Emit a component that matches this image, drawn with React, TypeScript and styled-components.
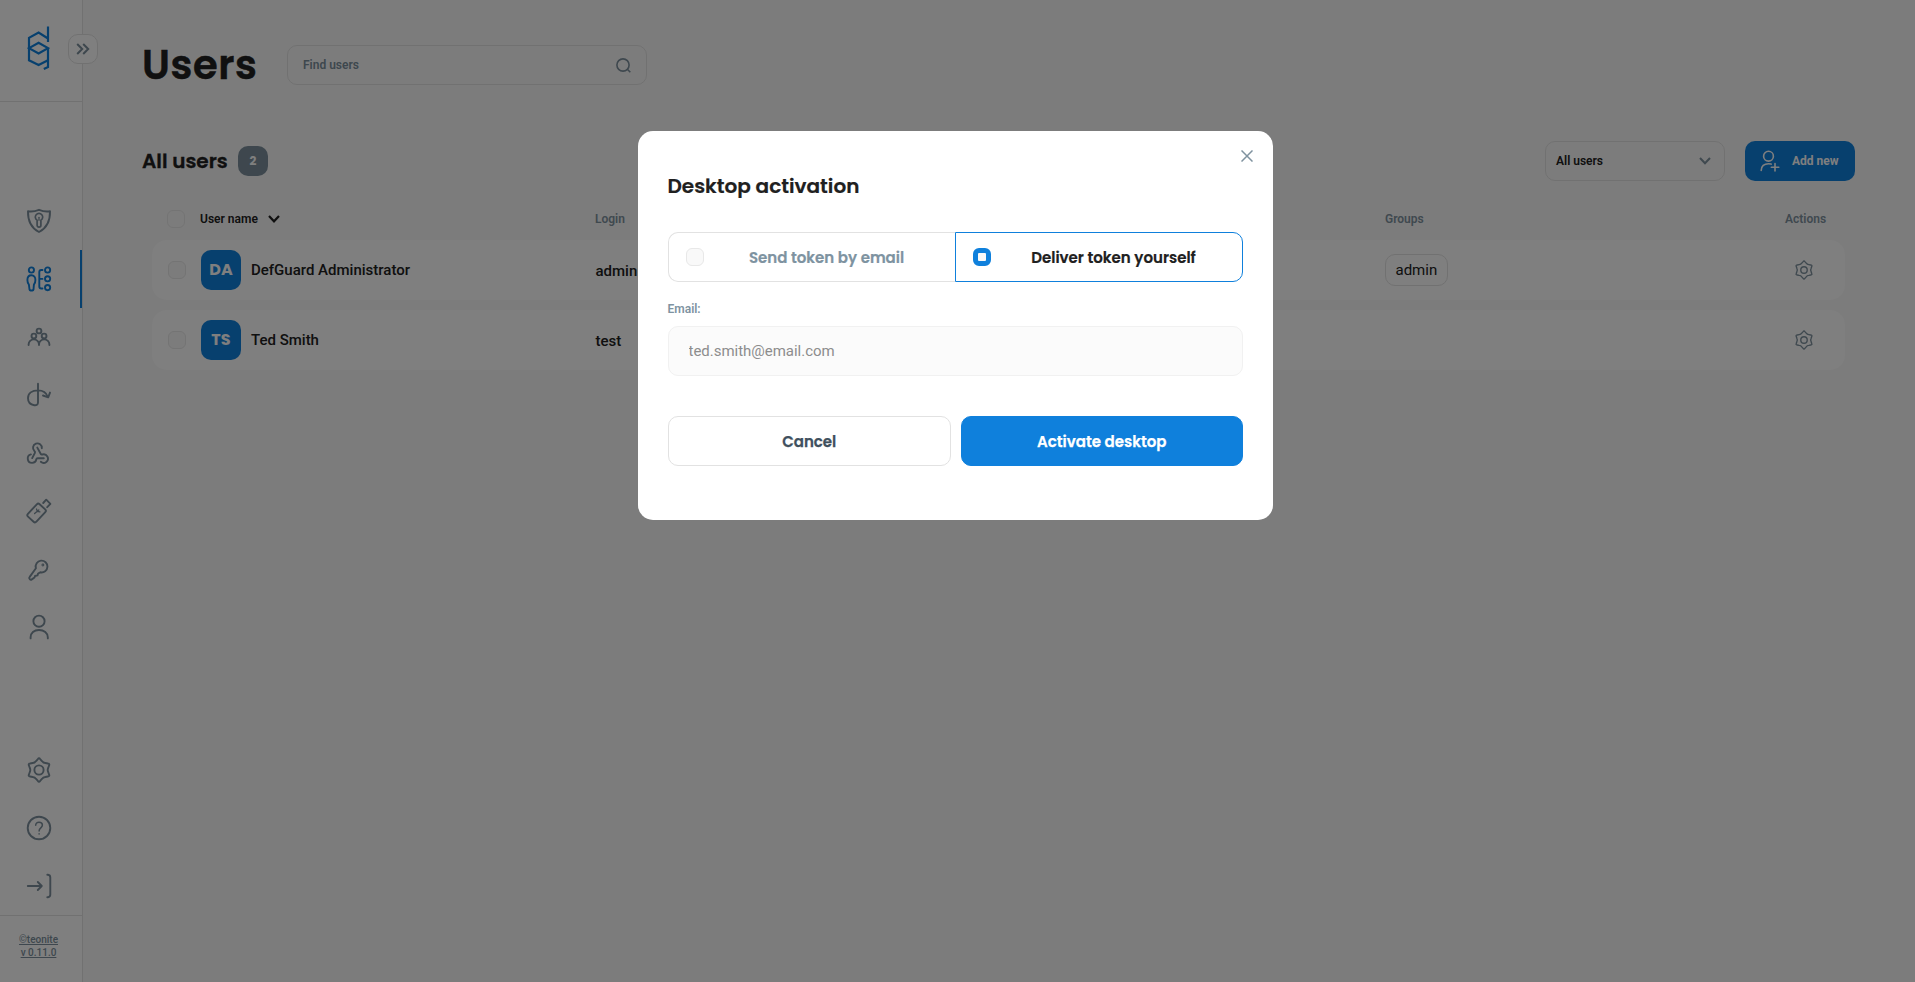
import React from 'react';
import styled, { createGlobalStyle, css } from 'styled-components';

const c = {
  bg: '#f9f9f9',
  white: '#ffffff',
  border: '#e3e3e3',
  primary: '#0f80dc',
  grey: '#7f929f',
  icon: '#7c8f9c',
  slate: '#7e93a1',
  dark: '#202020',
  button: '#3f505e',
};

const heading = css`
  font-family: Poppins, Inter, 'Open Sans', sans-serif;
`;

const GlobalStyle = createGlobalStyle`
  * { box-sizing: border-box; }
  body {
    margin: 0;
    overflow: hidden;
    background: ${c.bg};
    font-family: Roboto, 'Liberation Sans', sans-serif;
    color: ${c.dark};
  }
  button, input { font: inherit; color: inherit; margin: 0; }
  button { cursor: pointer; }
`;

const Page = styled.div`
  display: flex;
  height: 100vh;
  min-height: 982px;
`;

const Sidebar = styled.nav`
  position: relative;
  display: flex;
  flex-direction: column;
  flex: 0 0 83px;
  background: ${c.white};
  border-right: 1px solid ${c.border};
`;

const LogoArea = styled.div`
  height: 102px;
  padding: 26px 0 0 27px;
  border-bottom: 1px solid ${c.border};
`;

const ExpandButton = styled.button`
  position: absolute;
  top: 34px;
  left: 68px;
  width: 30px;
  height: 30px;
  padding: 0;
  display: grid;
  place-items: center;
  background: ${c.white};
  border: 1px solid ${c.border};
  border-radius: 10px;
`;

const NavList = styled.div<{ $bottom?: boolean }>`
  display: flex;
  flex-direction: column;
  ${(p) => (p.$bottom ? 'margin-top: auto;' : 'margin-top: 90px;')}
`;

const NavItem = styled.a<{ $active?: boolean }>`
  display: flex;
  align-items: center;
  height: 58px;
  padding-left: 26px;
  color: ${(p) => (p.$active ? c.primary : c.icon)};
  border-right: 2px solid ${(p) => (p.$active ? c.primary : 'transparent')};
`;

const Version = styled.footer`
  height: 67px;
  padding-top: 17px;
  padding-right: 5px;
  border-top: 1px solid ${c.border};
  text-align: center;
  font-size: 10px;
  line-height: 13px;
  font-weight: 500;
  color: ${c.icon};
  text-decoration: underline;
`;

const Main = styled.main`
  flex: 1;
  min-width: 0;
  padding: 35px 60px 0 59px;
`;

const PageHeader = styled.header`
  display: flex;
  align-items: center;
  height: 60px;
`;

const PageTitle = styled.h1`
  ${heading}
  width: 145px;
  margin: 0;
  font-size: 40px;
  line-height: 60px;
  font-weight: 600;
  letter-spacing: 0.6px;
  -webkit-text-stroke: 0.5px;
`;

const SearchBox = styled.div`
  display: flex;
  align-items: center;
  justify-content: space-between;
  width: 360px;
  height: 40px;
  padding: 0 15px;
  border: 1px solid ${c.border};
  border-radius: 10px;
  font-size: 12px;
  font-weight: 600;
  color: ${c.icon};
`;

const ListHeader = styled.div`
  display: flex;
  align-items: center;
  height: 40px;
  margin-top: 46px;
`;

const ListTitle = styled.h2`
  ${heading}
  width: 96px;
  margin: 0;
  font-size: 20px;
  font-weight: 600;
  white-space: nowrap;
  -webkit-text-stroke: 0.3px;
`;

const Count = styled.span`
  ${heading}
  width: 30px;
  height: 30px;
  border-radius: 10px;
  background: ${c.icon};
  color: ${c.white};
  font-size: 12px;
  font-weight: 700;
  line-height: 30px;
  text-align: center;
`;

const Select = styled.div`
  display: flex;
  align-items: center;
  justify-content: space-between;
  width: 180px;
  height: 40px;
  margin-left: auto;
  padding: 0 13px 0 10px;
  border: 1px solid ${c.border};
  border-radius: 10px;
  font-size: 12px;
  font-weight: 600;
`;

const AddButton = styled.button`
  display: flex;
  align-items: center;
  width: 110px;
  height: 40px;
  margin-left: 20px;
  padding: 0 0 0 15px;
  gap: 12px;
  border: 0;
  border-radius: 10px;
  background: ${c.primary};
  color: ${c.white};
  font-size: 12px;
  font-weight: 700;
  white-space: nowrap;
`;

const Grid = styled.div`
  display: grid;
  grid-template-columns: 33px 395px 790px 1fr 60px;
  align-items: center;
`;

const TableHead = styled(Grid)`
  height: 40px;
  margin: 18px 10px 1px;
  padding-left: 15px;
  font-size: 12px;
  font-weight: 600;
  color: ${c.grey};
`;

const SortLabel = styled.span`
  display: flex;
  align-items: center;
  gap: 10px;
  color: ${c.dark};
`;

const Row = styled(Grid)`
  height: 60px;
  margin: 0 10px 10px;
  padding-left: 16px;
  grid-template-columns: 33px 394px 790px 1fr 82px;
  border-radius: 15px;
  background: #fefefe;
  font-size: 15px;
`;

const UserCell = styled.div`
  display: flex;
  align-items: center;
  gap: 10px;
  font-weight: 500;
`;

const Avatar = styled.span`
  ${heading}
  width: 40px;
  height: 40px;
  border-radius: 10px;
  background: ${c.primary};
  color: ${c.white};
  font-size: 16px;
  font-weight: 700;
  line-height: 40px;
  text-align: center;
`;

const LoginCell = styled.span`
  padding-top: 2px;
  padding-left: 0.5px;
  font-weight: 500;
`;

const GroupTag = styled.span`
  display: inline-block;
  height: 32px;
  padding: 0 9.5px;
  border: 1px solid ${c.border};
  border-radius: 10px;
  line-height: 30px;
`;

const ActionCell = styled.span`
  display: flex;
  padding-left: 31px;
  color: ${c.grey};
`;

const Checkbox = styled.span<{ $checked?: boolean }>`
  display: block;
  flex: none;
  width: 18px;
  height: 18px;
  border-radius: 6px;
  background: #f9f9f9;
  border: ${(p) => (p.$checked ? `5px solid ${c.primary}` : '1px solid #e8e8e8')};
`;

const Backdrop = styled.div`
  position: fixed;
  inset: 0;
  display: flex;
  justify-content: center;
  align-items: flex-start;
  padding: 131px 4px 0 0;
  background: rgba(0, 0, 0, 0.5);
`;

const Dialog = styled.section`
  position: relative;
  width: 635px;
  height: 389px;
  padding: 37px 30px 0;
  background: ${c.white};
  border-radius: 15px;
`;

const CloseButton = styled.button`
  position: absolute;
  top: 19px;
  right: 20px;
  width: 12px;
  height: 12px;
  padding: 0;
  border: 0;
  background: none;
  color: ${c.grey};
  svg { display: block; }
`;

const DialogTitle = styled.h3`
  ${heading}
  margin: 0 0 28px;
  font-size: 20px;
  line-height: 36px;
  font-weight: 600;
  text-indent: -0.5px;
  -webkit-text-stroke: 0.2px;
`;

const OptionGroup = styled.div`
  display: flex;
`;

const Option = styled.button<{ $active?: boolean }>`
  ${heading}
  display: flex;
  align-items: center;
  flex: 1;
  height: 50px;
  padding: 0 16px 0 17px;
  background: ${c.white};
  border: 1px solid ${(p) => (p.$active ? c.primary : '#e2e2e2')};
  border-radius: ${(p) => (p.$active ? '0 10px 10px 0' : '10px 0 0 10px')};
  ${(p) => !p.$active && 'border-right: 0;'}
  color: ${(p) => (p.$active ? c.dark : c.slate)};
  font-size: 15px;
  font-weight: 600;
  -webkit-text-stroke: 0.2px;
`;

const OptionLabel = styled.span`
  flex: 1;
  padding-left: 10px;
  text-align: center;
  white-space: nowrap;
`;

const FieldLabel = styled.label`
  display: block;
  margin: 18px 0 8px;
  font-size: 12px;
  line-height: 18px;
  font-weight: 600;
  text-indent: -0.5px;
  color: ${c.slate};
`;

const EmailInput = styled.input`
  display: block;
  width: 100%;
  height: 50px;
  padding: 0 19.5px;
  border: 1px solid #f1f1f1;
  border-radius: 10px;
  background: #fbfbfb;
  color: #8d8d8d;
  font-size: 15px;
  letter-spacing: -0.02px;
  outline: 0;
`;

const ButtonRow = styled.div`
  display: flex;
  gap: 10px;
  margin-top: 40px;
`;

const DialogButton = styled.button<{ $primary?: boolean }>`
  ${heading}
  flex: 1;
  height: 50px;
  padding: 0;
  border: 1px solid ${(p) => (p.$primary ? c.primary : '#e2e2e2')};
  border-radius: 10px;
  background: ${(p) => (p.$primary ? c.primary : c.white)};
  color: ${(p) => (p.$primary ? c.white : c.button)};
  font-size: 15px;
  font-weight: 600;
  -webkit-text-stroke: 0.25px;
`;

const Icon = ({ size = 26, width = 1.9, children }: { size?: number; width?: number; children: React.ReactNode }) => (
  <svg width={size} height={size} viewBox="0 0 26 26" fill="none" stroke="currentColor" strokeWidth={width} strokeLinecap="round" strokeLinejoin="round">
    {children}
  </svg>
);

const Logo = () => (
  <svg width="23" height="45" viewBox="0 0 23 45" fill="none" stroke={c.primary} strokeWidth="2.2">
    <path d="M21 0.500v15.500M21 12.500 11.600 6.500 2 11.900v22.400l9.600 4.700 9.400-4.700" />
    <path d="M2 22.100 11.600 16.700 21 22.100 11.600 27.500Z" />
    <path d="M21 22v19l-4.200 1.900" />
  </svg>
);

const gearPath = (() => {
  const at = (r: number, deg: number) => {
    const a = (deg * Math.PI) / 180;
    return `${(13 + r * Math.sin(a)).toFixed(2)} ${(13 - r * Math.cos(a)).toFixed(2)}`;
  };
  let d = `M${at(11, -6)}`;
  for (let a = 0; a < 360; a += 60) {
    d += ` Q${at(12.6, a)} ${at(11, a + 6)} L${at(9.4, a + 18)} Q${at(8.2, a + 30)} ${at(9.4, a + 42)} L${at(11, a + 54)}`;
  }
  return `${d}Z`;
})();

const Gear = ({ size, width, hole = 4.6 }: { size?: number; width?: number; hole?: number }) => (
  <Icon size={size} width={width}>
    <path d={gearPath} />
    <circle cx="13" cy="13" r={hole} />
  </Icon>
);

const Shield = () => (
  <Icon>
    <path d="M2 3.200c4.200.7 8-.2 11-1.400 3 1.200 6.800 2.100 11 1.400.2 9.400-2.600 16.500-11 20.800C4.600 19.700 1.800 12.600 2 3.200Z" />
    <path d="M11.100 12.300a3.700 3.700 0 1 1 3.800 0v4.900a1.900 1.900 0 0 1-3.800 0Z" strokeWidth="1.700" />
    <path d="M13 9.300v3" strokeWidth="1.300" />
  </Icon>
);

const Users = () => (
  <Icon width={1.9}>
    <circle cx="5.400" cy="4" r="2.600" />
    <path d="M5.400 9.300c2.600 0 4 1.900 4 4.700 0 2.200-.6 3.700-1.500 4.700L7.500 23.500q-.2 1-1 1h-2q-.8 0-1-1L2.900 18.700C2 17.700 1.400 16.200 1.400 14c0-2.800 1.400-4.700 4-4.700Z" />
    <path d="M16.500 4h-1.200q-2 0-2 2v14.500q0 2 2 2h1.200M13.300 12.900h3.200" />
    <circle cx="21.600" cy="4" r="2.600" />
    <circle cx="21.600" cy="12.800" r="2.600" />
    <circle cx="21.600" cy="21.600" r="2.600" />
  </Icon>
);

const Groups = () => (
  <Icon width={1.9}>
    <circle cx="13" cy="7" r="2.400" />
    <circle cx="7.900" cy="12" r="2.400" />
    <circle cx="18.100" cy="12" r="2.400" />
    <path d="M2.600 21v-.6a5.200 5 0 0 1 10.400 0v.6M13 21v-.6a5.200 5 0 0 1 10.400 0v.6" />
  </Icon>
);

const OpenId = () => (
  <Icon width={1.9}>
    <path d="M12 1.800V20.400c0 2-1.500 3.100-3.700 2.800C4.700 22.600 2 20 2 16.200 2 11.400 6 8.400 12 8.400c5.200 0 8.300 2.200 9.700 6.300" />
    <path d="m17 13.500 5.200 1.800L24 10.600" />
  </Icon>
);

const Webhook = () => (
  <Icon width={1.9}>
    <path d="M15.800 8.200a4.400 4.400 0 1 0-7.400 2.800q1 .9.500 1.900l-2.700 5.200" />
    <path d="m11.300 7.600 3.500 6.400q.4.800 1.400.5a4.300 4.300 0 1 1-1.400 7.300" />
    <path d="M17.800 18.300h-6.200q-1.100 0-1.300 1a4.300 4.300 0 1 1-5.400-4.900" />
  </Icon>
);

const UsbKey = () => (
  <Icon>
    <rect x="-5.800" y="-8.500" width="11.600" height="17" rx="2" transform="translate(10.600 15) rotate(43)" />
    <path d="m17.200 5 3-3.300 4.200 4.200-3.200 3.300" />
    <path d="m8.600 15.600 4.200-3.600M11.300 13.200l-.8-2.200M11.400 13.400l2.500.5" strokeWidth="1.300" />
  </Icon>
);

const Key = () => (
  <Icon>
    <path d="M9.900 12.200a5.900 5.900 0 1 1 4.400 4.100l-2.200 1.200-.6 1.900-2.500.6-.5 1.500-2.700 1.900c-.8.600-1.600.300-2.100-.2-.7-.7-.6-1.600 0-2.300Z" />
    <circle cx="16.900" cy="9" r=".5" />
  </Icon>
);

const Person = () => (
  <Icon>
    <circle cx="13" cy="7.200" r="5.600" />
    <path d="M4.600 24.400v-1.100c0-4.200 3.400-7.300 8.400-7.300s8.800 3.100 8.800 7.300v1.100" />
  </Icon>
);

const Help = () => (
  <Icon>
    <circle cx="13" cy="13" r="11.300" />
    <path d="M9.700 10.300c0-2 1.400-3.100 3.300-3.100s3.400 1.100 3.400 2.900c0 2.900-3.300 2.800-3.300 6M13.100 18.700v.2" strokeWidth="1.500" />
  </Icon>
);

const Logout = () => (
  <Icon width={1.9}>
    <path d="M1.800 13h14M11.800 9l4 4-4 4M21.300 1.800h.7q2.300.3 2.300 2.700v17q0 2.400-2.300 2.700h-.7" />
  </Icon>
);

const navIcons = [Shield, Users, Groups, OpenId, Webhook, UsbKey, Key, Person];
const bottomIcons = [Gear, Help, Logout];

const users = [
  { initials: 'DA', name: 'DefGuard Administrator', login: 'admin', group: 'admin' },
  { initials: 'TS', name: 'Ted Smith', login: 'test', group: '' },
];

const Chevron = ({ color, width }: { color: string; width: number }) => (
  <svg width="12" height="8" viewBox="0 0 12 8" fill="none" stroke={color} strokeWidth={width}>
    <path d="m1 1 5 5.300L11 1" />
  </svg>
);

export default function App() {
  return (
    <>
      <GlobalStyle />
      <Page>
        <Sidebar>
          <LogoArea><Logo /></LogoArea>
          <ExpandButton aria-label="Expand navigation">
            <svg width="14" height="12" viewBox="0 0 14 12" fill="none" stroke={c.icon} strokeWidth="2">
              <path d="m1.200 1 5 5-5 5M7.200 1l5 5-5 5" />
            </svg>
          </ExpandButton>
          <NavList>
            {navIcons.map((NavIcon, i) => (
              <NavItem key={i} $active={i === 1}><NavIcon /></NavItem>
            ))}
          </NavList>
          <NavList $bottom>
            {bottomIcons.map((NavIcon, i) => (
              <NavItem key={i}><NavIcon /></NavItem>
            ))}
          </NavList>
          <Version>©teonite<br />v 0.11.0</Version>
        </Sidebar>

        <Main>
          <PageHeader>
            <PageTitle>Users</PageTitle>
            <SearchBox>
              Find users
              <svg width="15" height="15" viewBox="0 0 15 15" fill="none" stroke="currentColor" strokeWidth="1.600">
                <circle cx="7" cy="7" r="6.100" />
                <path d="m11.300 11.300 3 3" />
              </svg>
            </SearchBox>
          </PageHeader>

          <ListHeader>
            <ListTitle>All users</ListTitle>
            <Count>2</Count>
            <Select>
              All users
              <Chevron color={c.grey} width={2} />
            </Select>
            <AddButton>
              <svg width="20" height="22" viewBox="0 0 20 22" fill="none" stroke="currentColor" strokeWidth="1.600" strokeLinecap="round">
                <circle cx="8.500" cy="6.200" r="4.900" />
                <path d="M1.200 20.500c0-4.500 3-6.800 7.300-6.800 1 0 1.800.1 2.600.4M11.300 17.300h7.500M15 13.600V21" />
              </svg>
              Add new
            </AddButton>
          </ListHeader>

          <TableHead>
            <Checkbox />
            <SortLabel>User name <Chevron color={c.dark} width={2.2} /></SortLabel>
            <span>Login</span>
            <span>Groups</span>
            <span>Actions</span>
          </TableHead>
          {users.map((u) => (
            <Row key={u.name}>
              <Checkbox />
              <UserCell><Avatar>{u.initials}</Avatar>{u.name}</UserCell>
              <LoginCell>{u.login}</LoginCell>
              <span>{u.group && <GroupTag>{u.group}</GroupTag>}</span>
              <ActionCell><Gear size={20} width={1.8} hole={4.2} /></ActionCell>
            </Row>
          ))}
        </Main>
      </Page>

      <Backdrop>
        <Dialog role="dialog">
          <CloseButton aria-label="Close">
            <svg width="12" height="12" viewBox="0 0 12 12" stroke="currentColor" strokeWidth="1.500">
              <path d="m.5.5 11 11M11.500.5l-11 11" />
            </svg>
          </CloseButton>
          <DialogTitle>Desktop activation</DialogTitle>
          <OptionGroup>
            <Option><Checkbox /><OptionLabel>Send token by email</OptionLabel></Option>
            <Option $active><Checkbox $checked /><OptionLabel>Deliver token yourself</OptionLabel></Option>
          </OptionGroup>
          <FieldLabel htmlFor="email">Email:</FieldLabel>
          <EmailInput id="email" readOnly value="ted.smith@email.com" />
          <ButtonRow>
            <DialogButton>Cancel</DialogButton>
            <DialogButton $primary>Activate desktop</DialogButton>
          </ButtonRow>
        </Dialog>
      </Backdrop>
    </>
  );
}
